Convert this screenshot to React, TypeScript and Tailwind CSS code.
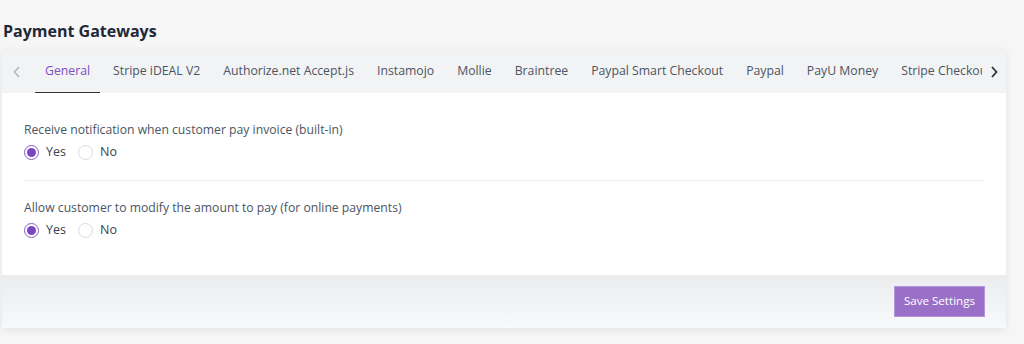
const tabs = [
  "General",
  "Stripe iDEAL V2",
  "Authorize.net Accept.js",
  "Instamojo",
  "Mollie",
  "Braintree",
  "Paypal Smart Checkout",
  "Paypal",
  "PayU Money",
  "Stripe Checkout",
];

function Radio({ checked, label }: { checked?: boolean; label: string }) {
  return (
    <label className="flex items-center gap-[7px] text-[12.5px] text-[#374151]">
      <span
        className={
          checked
            ? "w-[15px] h-[15px] rounded-full border border-[#8b5cc8] flex items-center justify-center bg-white"
            : "w-[15px] h-[15px] rounded-full border border-[#d8dbe0] bg-white"
        }
      >
        {checked && <span className="w-[9px] h-[9px] rounded-full bg-[#7c45c2]" />}
      </span>
      {label}
    </label>
  );
}

function Setting({ label }: { label: string }) {
  return (
    <div>
      <p className="text-[12.2px] text-[#4b5563] leading-[18px]">{label}</p>
      <div className="flex items-center gap-[12px] mt-[4px]">
        <Radio checked label="Yes" />
        <Radio label="No" />
      </div>
    </div>
  );
}

export default function App() {
  return (
    <div
      className="w-[1024px] h-[344px] bg-[#f6f6f7] overflow-hidden"
      style={{ fontFamily: '"Open Sans", "Liberation Sans", sans-serif' }}
    >
      <h1 className="pl-[3px] pt-[19px] h-[50px] text-[16px] font-bold text-[#1f2937]">
        Payment Gateways
      </h1>

      <div className="ml-[2px] w-[1004px] shadow-[0_2px_8px_rgba(0,0,0,0.08)]">
        <div className="bg-white">
          <div className="h-[43px] bg-[#f2f3f5] flex items-stretch">
            <div className="w-[30px] flex items-center justify-center text-[#b6bac1]">
              <svg width="8" height="12" viewBox="0 0 8 12" fill="none" stroke="currentColor" strokeWidth="1.6">
                <path d="M6 1 L1.5 6 L6 11" />
              </svg>
            </div>
            <div className="flex-1 flex items-stretch overflow-hidden gap-[3px] pl-[3px]">
              {tabs.map((t, i) => (
                <div
                  key={t}
                  className={
                    i === 0
                      ? "shrink-0 px-[10px] flex items-center text-[12.25px] text-[#7c4ec0] border-b-[1.5px] border-[#333]"
                      : "shrink-0 px-[10px] flex items-center text-[12.25px] text-[#4b5563]"
                  }
                >
                  {t}
                </div>
              ))}
            </div>
            <div className="w-[24px] flex items-center justify-center text-[#2d3138]">
              <svg width="8" height="12" viewBox="0 0 8 12" fill="none" stroke="currentColor" strokeWidth="1.8">
                <path d="M2 1 L6.5 6 L2 11" />
              </svg>
            </div>
          </div>

          <div className="px-[22px] pt-[28px] pb-[35px]">
            <Setting label="Receive notification when customer pay invoice (built-in)" />
            <div className="border-t border-[#eceef1] mt-[18px] mb-[18px]" />
            <Setting label="Allow customer to modify the amount to pay (for online payments)" />
          </div>
        </div>

        <div className="h-[53px] bg-gradient-to-b from-[#ebecee] to-[#f8f9fa] flex items-center justify-end pr-[21px]">
          <button className="h-[31px] px-[9px] bg-[#9a6fc7] border border-[#b595dc] text-white text-[11.6px]">
            Save Settings
          </button>
        </div>
      </div>
    </div>
  );
}
